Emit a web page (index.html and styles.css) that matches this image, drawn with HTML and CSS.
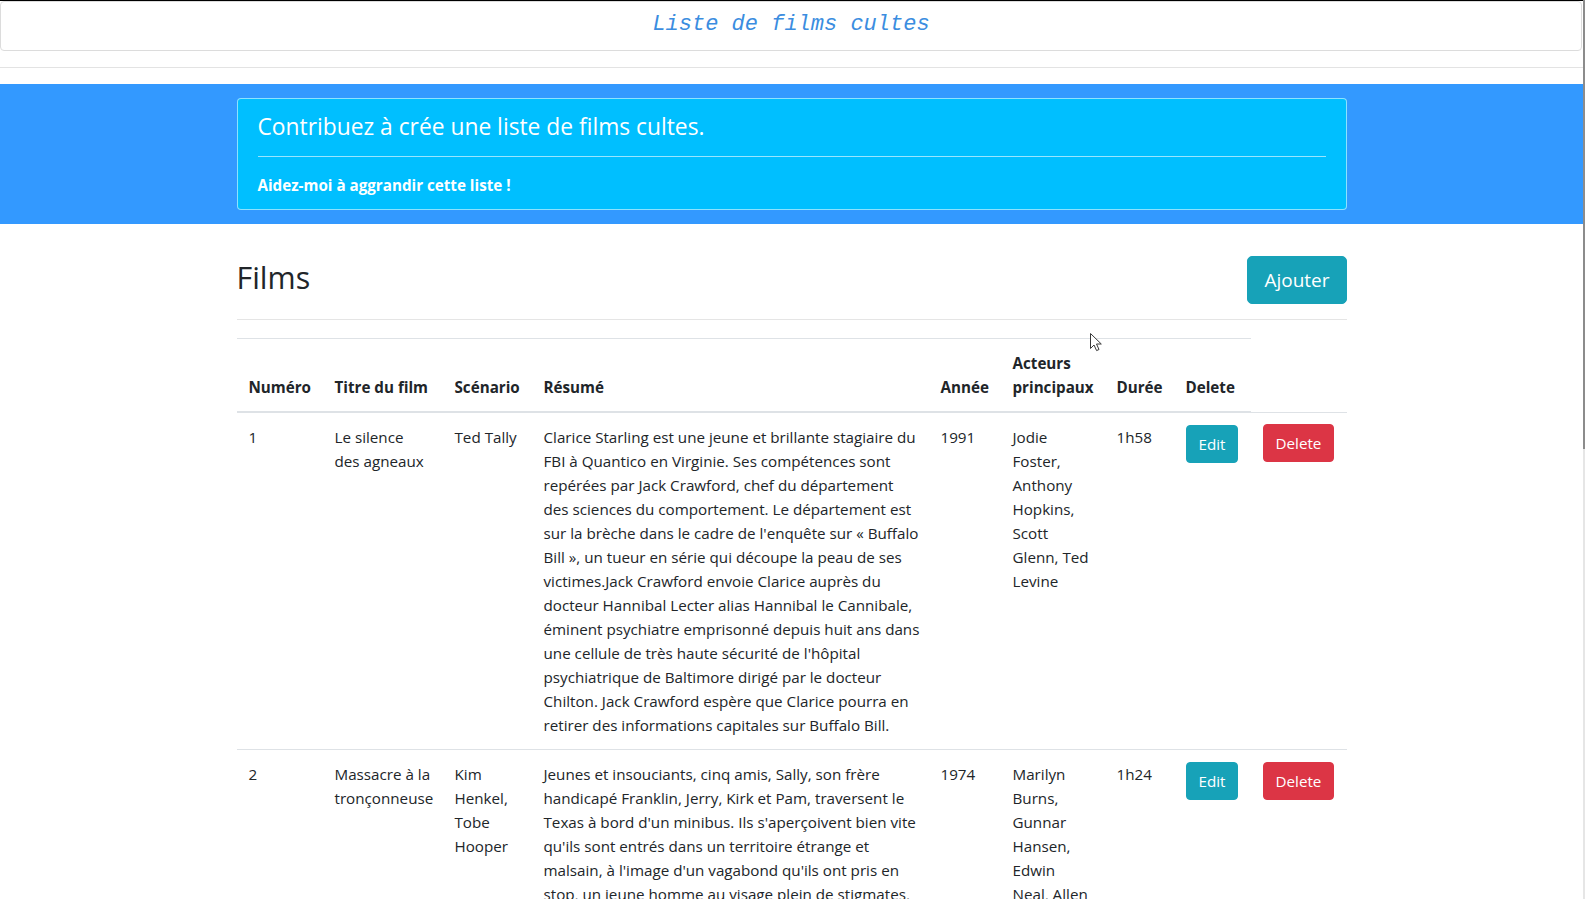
FILE: index.html
```html
<!DOCTYPE html>
<html lang="fr">
<head>
<meta charset="utf-8">
<title>Liste de films cultes</title>
<link rel="stylesheet" href="styles.css">
</head>
<body>
<header class="site-header">
  <h1 class="site-title">Liste de films cultes</h1>
</header>
<hr class="divider">
<section class="hero">
  <div class="container">
    <div class="hero-box">
      <p class="hero-lead">Contribuez à crée une liste de films cultes.</p>
      <hr class="hero-rule">
      <p class="hero-note">Aidez-moi à aggrandir cette liste !</p>
    </div>
  </div>
</section>
<main class="container">
  <div class="films-head">
    <h2 class="films-title">Films</h2>
    <a class="btn btn-info btn-lg">Ajouter</a>
  </div>
  <hr class="section-rule">
  <table class="films-table">
    <colgroup>
      <col class="c-num"><col class="c-title"><col class="c-script"><col class="c-sum"><col class="c-year"><col class="c-actors"><col class="c-dur"><col class="c-edit"><col class="c-del">
    </colgroup>
    <thead>
      <tr>
        <th>Numéro</th>
        <th>Titre du film</th>
        <th>Scénario</th>
        <th>Résumé</th>
        <th>Année</th>
        <th>Acteurs principaux</th>
        <th>Durée</th>
        <th>Delete</th>
      </tr>
    </thead>
    <tbody>
      <tr>
        <td>1</td>
        <td class="lines">Le silence<br>des agneaux</td>
        <td class="lines">Ted Tally</td>
        <td class="lines">Clarice Starling est une jeune et brillante stagiaire du<br>FBI à Quantico en Virginie. Ses compétences sont<br>repérées par Jack Crawford, chef du département<br>des sciences du comportement. Le département est<br>sur la brèche dans le cadre de l'enquête sur « Buffalo<br>Bill », un tueur en série qui découpe la peau de ses<br>victimes.Jack Crawford envoie Clarice auprès du<br>docteur Hannibal Lecter alias Hannibal le Cannibale,<br>éminent psychiatre emprisonné depuis huit ans dans<br>une cellule de très haute sécurité de l'hôpital<br>psychiatrique de Baltimore dirigé par le docteur<br>Chilton. Jack Crawford espère que Clarice pourra en<br>retirer des informations capitales sur Buffalo Bill.</td>
        <td>1991</td>
        <td class="lines">Jodie<br>Foster,<br>Anthony<br>Hopkins,<br>Scott<br>Glenn, Ted<br>Levine</td>
        <td>1h58</td>
        <td><a class="btn btn-info">Edit</a></td>
        <td><a class="btn btn-danger btn-raise">Delete</a></td>
      </tr>
      <tr>
        <td>2</td>
        <td class="lines">Massacre à la<br>tronçonneuse</td>
        <td class="lines">Kim<br>Henkel,<br>Tobe<br>Hooper</td>
        <td class="lines">Jeunes et insouciants, cinq amis, Sally, son frère<br>handicapé Franklin, Jerry, Kirk et Pam, traversent le<br>Texas à bord d'un minibus. Ils s'aperçoivent bien vite<br>qu'ils sont entrés dans un territoire étrange et<br>malsain, à l'image d'un vagabond qu'ils ont pris en<br>stop, un jeune homme au visage plein de stigmates,<br>qui les menace d'un couteau avant d'être jeté hors<br>du véhicule. Tombés en panne d'essence, ils<br>s'arrêtent près d'une vieille maison isolée.</td>
        <td>1974</td>
        <td class="lines">Marilyn<br>Burns,<br>Gunnar<br>Hansen,<br>Edwin<br>Neal, Allen<br>Danziger,<br>Paul A.<br>Partain</td>
        <td>1h24</td>
        <td><a class="btn btn-info">Edit</a></td>
        <td><a class="btn btn-danger">Delete</a></td>
      </tr>
    </tbody>
  </table>
</main>
<svg class="cursor" width="14" height="20" viewBox="0 0 14 20" aria-hidden="true">
  <path d="M1.5 1.5 L1.5 16.5 L5 13 L7.6 18.6 L10 17.5 L7.5 12 L12.3 12 Z" fill="#ffffff" stroke="#3a3a3a" stroke-width="1" stroke-linejoin="round"/>
</svg>
<div class="scroll-track"><div class="scroll-thumb"></div></div>
</body>
</html>
```
FILE: styles.css
```css
html {
  overflow: hidden;
}

body {
  margin: 0 2px 0 0;
  border-top: 1px solid #000;
  position: relative;
  min-height: 1800px;
  font-family: "Open Sans", "Segoe UI", "Noto Sans", sans-serif;
  font-size: 15.2px;
  line-height: 24px;
  color: #212529;
  background: #fff;
}

.site-header {
  border: 1px solid #dcdcdc;
  border-radius: 4px;
  padding: 10px 0 12px;
  text-align: center;
  margin-right: 1px;
}

.site-title {
  margin: 0;
  font-family: "Liberation Mono", "Courier New", monospace;
  font-style: italic;
  font-weight: normal;
  font-size: 22px;
  line-height: 26px;
  color: #3b8de0;
}

.divider {
  border: 0;
  border-top: 1px solid #e3e3e3;
  margin: 16px 0;
  height: 0;
}

.container {
  width: 1110px;
  margin: 0 auto;
}

.hero {
  background: #3399ff;
  padding: 14px 0;
}

.hero-box {
  background: #00bfff;
  border: 1px solid rgba(255, 255, 255, 0.55);
  border-radius: 4px;
  padding: 14px 20px 12px;
  color: #fff;
}

.hero-lead {
  margin: 0;
  font-size: 22.8px;
  line-height: 27px;
  font-weight: 400;
}

.hero-rule {
  border: 0;
  border-top: 1px solid rgba(255, 255, 255, 0.6);
  margin: 16px 0;
  height: 0;
}

.hero-note {
  margin: 0;
  font-weight: 700;
}

.films-head {
  display: flex;
  justify-content: space-between;
  align-items: center;
  margin-top: 32px;
}

.films-title {
  margin: 0 0 4px;
  font-size: 30.4px;
  line-height: 36px;
  font-weight: 400;
  color: #212529;
}

.btn {
  display: inline-block;
  padding: 6px 12px;
  line-height: 24px;
  font-size: 15.2px;
  border: 1px solid transparent;
  border-radius: 4px;
  color: #fff;
  text-decoration: none;
  cursor: pointer;
}

.btn-info {
  background: #17a2b8;
  border-color: #17a2b8;
}

.btn-danger {
  background: #dc3545;
  border-color: #dc3545;
}

.btn-raise {
  position: relative;
  top: -1px;
}

.btn-lg {
  padding: 8px 16px;
  font-size: 19px;
  line-height: 30px;
  border-radius: 5px;
}

.section-rule {
  border: 0;
  border-top: 1px solid #e5e5e5;
  margin: 15px 0 18px;
  height: 0;
}

.films-table {
  width: 100%;
  border-collapse: collapse;
  table-layout: fixed;
}

.c-num { width: 86px; }
.c-title { width: 120px; }
.c-script { width: 89px; }
.c-sum { width: 397px; }
.c-year { width: 72px; }
.c-actors { width: 104px; }
.c-dur { width: 69px; }
.c-edit { width: 77px; }
.c-del { width: 96px; }

.films-table th,
.films-table td {
  padding: 12px;
  text-align: left;
  vertical-align: top;
  border-top: 1px solid #dee2e6;
}

.films-table thead th {
  vertical-align: bottom;
  border-bottom: 2px solid #dee2e6;
  font-weight: 700;
}

.lines {
  white-space: nowrap;
}

.cursor {
  position: absolute;
  left: 1089px;
  top: 331px;
}

.scroll-track {
  position: fixed;
  top: 0;
  right: 0;
  width: 2px;
  height: 100%;
  background: #e6e6e6;
}

.scroll-thumb {
  height: 449px;
  background: #8c8c8c;
}
```
